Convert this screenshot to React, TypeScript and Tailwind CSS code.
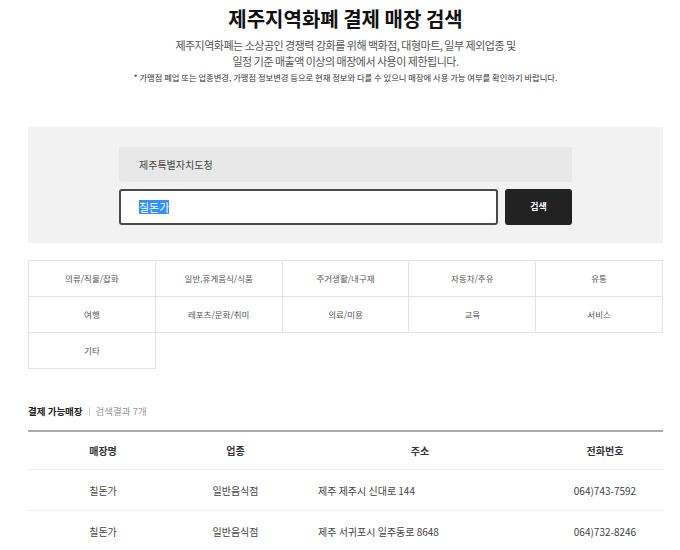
import React from "react";

const cats = [
  "의류/직물/잡화",
  "일반,휴게음식/식품",
  "주거생활/내구재",
  "자동차/주유",
  "유통",
  "여행",
  "레포츠/문화/취미",
  "의료/미용",
  "교육",
  "서비스",
  "기타",
];

const rows = [
  ["칠돈가", "일반음식점", "제주 제주시 신대로 144", "064)743-7592"],
  ["칠돈가", "일반음식점", "제주 서귀포시 일주동로 8648", "064)732-8246"],
];

export default function App() {
  return (
    <div
      className="w-[680px] h-[550px] overflow-hidden bg-white text-[#333]"
      style={{ fontFamily: '"Noto Sans CJK KR", "Noto Sans", sans-serif' }}
    >
      <div className="ml-[28px] mr-[17px]">
        <h1 className="pt-[5px] text-center text-[20px] leading-[28px] font-bold text-[#111]">
          제주지역화폐 결제 매장 검색
        </h1>
        <p className="mt-[4px] text-center text-[11px] leading-[16px] text-[#555] tracking-[-0.5px]">
          제주지역화폐는 소상공인 경쟁력 강화를 위해 백화점, 대형마트, 일부 제외업종 및
          <br />
          일정 기준 매출액 이상의 매장에서 사용이 제한됩니다.
        </p>
        <p className="mt-[2px] text-center text-[8.3px] leading-[12px] text-[#333] whitespace-nowrap">
          * 가맹점 폐업 또는 업종변경, 가맹점 정보변경 등으로 현재 정보와 다를 수 있으니 매장에 사용 가능 여부를 확인하기 바랍니다.
        </p>

        <div className="mt-[44px] h-[116px] bg-[#f2f2f2] pt-[20px]">
          <div className="mx-auto w-[453px]">
            <div className="h-[35px] bg-[#e8e8e8] rounded-[2px] flex items-center pl-[20px] text-[10px] text-[#444]">
              제주특별자치도청
            </div>
            <div className="mt-[7px] flex gap-[7px] h-[36px]">
              <div className="w-[379px] h-full bg-white border-2 border-[#4a4a4a] rounded-[3px] flex items-center pl-[18px] text-[11px]">
                <span className="bg-[#3390ff] text-white leading-[14px]">칠돈가</span>
              </div>
              <div className="flex-1 h-full bg-[#222] rounded-[3px] flex items-center justify-center text-white text-[9px] font-bold">
                검색
              </div>
            </div>
          </div>
        </div>

        <div className="mt-[17px] grid grid-cols-5 border-t border-l border-[#e4e4e4]">
          {cats.map((c) => (
            <div
              key={c}
              className="h-[36px] flex items-center justify-center border-r border-b border-[#e4e4e4] text-[8.5px] text-[#555]"
            >
              {c}
            </div>
          ))}
        </div>

        <div className="mt-[35px] flex items-center text-[9.5px] leading-[14px]">
          <span className="font-bold text-[#222]">결제 가능매장</span>
          <span className="mx-[6px] h-[9px] w-px bg-[#ccc]" />
          <span className="text-[#999]">검색결과 7개</span>
        </div>

        <div className="mt-[12px] border-t-2 border-[#aaa]">
          <div className="flex h-[38px] items-center border-b border-[#eee] text-[10px] font-bold text-[#333]">
            <div className="w-[150px] text-center">매장명</div>
            <div className="w-[115px] text-center">업종</div>
            <div className="w-[254px] text-center">주소</div>
            <div className="flex-1 text-center">전화번호</div>
          </div>
          {rows.map((r, i) => (
            <div
              key={i}
              className="flex h-[41px] items-center border-b border-[#eee] text-[10px] text-[#444]"
            >
              <div className="w-[150px] text-center">{r[0]}</div>
              <div className="w-[115px] text-center">{r[1]}</div>
              <div className="w-[254px] pl-[25px]">{r[2]}</div>
              <div className="flex-1 text-center">{r[3]}</div>
            </div>
          ))}
        </div>
      </div>
    </div>
  );
}
